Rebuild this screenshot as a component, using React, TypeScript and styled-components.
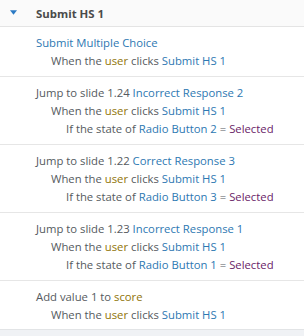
import React from 'react';
import styled, { createGlobalStyle } from 'styled-components';

type Tone = 'plain' | 'link' | 'user' | 'value';

type Part = [string, Tone];

interface ActionItem {
	lines: Part[][];
}

// the trigger line every action shares
const clickLine: Part[] = [
	['When the ', 'plain'],
	['user', 'user'],
	[' clicks ', 'plain'],
	['Submit HS 1', 'link'],
];

const stateLine = (button: string): Part[] => [
	['If the state of ', 'plain'],
	[button, 'link'],
	[' = ', 'plain'],
	['Selected', 'value'],
];

const actions: ActionItem[] = [
	{
		lines: [[['Submit Multiple Choice', 'link']], clickLine],
	},
	{
		lines: [
			[
				['Jump to slide 1.24 ', 'plain'],
				['Incorrect Response 2', 'link'],
			],
			clickLine,
			stateLine('Radio Button 2'),
		],
	},
	{
		lines: [
			[
				['Jump to slide 1.22 ', 'plain'],
				['Correct Response 3', 'link'],
			],
			clickLine,
			stateLine('Radio Button 3'),
		],
	},
	{
		lines: [
			[
				['Jump to slide 1.23 ', 'plain'],
				['Incorrect Response 1', 'link'],
			],
			clickLine,
			stateLine('Radio Button 1'),
		],
	},
	{
		lines: [
			[
				['Add value 1 to ', 'plain'],
				['score', 'user'],
			],
			clickLine,
		],
	},
];

const App = () => {
	return (
		<>
			<GlobalStyle />
			<Panel>
				<Header>
					<Caret viewBox="0 0 8 5">
						<path d="M0 0 H8 L4 5 Z" />
					</Caret>
					<HeaderTitle>Submit HS 1</HeaderTitle>
				</Header>
				<List>
					{actions.map((action, i) => (
						<Row key={i}>
							{action.lines.map((line, depth) => (
								<Line key={depth} depth={depth}>
									{line.map(([text, tone], k) => (
										<Token key={k} tone={tone}>
											{text}
										</Token>
									))}
								</Line>
							))}
						</Row>
					))}
				</List>
			</Panel>
		</>
	);
};

export default App;

const GlobalStyle = createGlobalStyle`
	html, body {
		margin: 0;
		padding: 0;
		background-color: #f0f2f5;
	}
	body {
		font-family: "Open Sans", "Noto Sans", sans-serif;
	}
`;

const Panel = styled.div`
	width: 304px;
	display: flex;
	flex-direction: column;
	background-color: #ffffff;
	border-bottom: 1px solid #e2e4e6;
`;

const Header = styled.div`
	height: 26px;
	display: flex;
	align-items: center;
	background-color: #fafafa;
	border-bottom: 1px solid #e4e4e4;
	padding-left: 10px;
`;

const Caret = styled.svg`
	width: 7px;
	height: 5px;
	fill: #2b7ac4;
	margin-right: 19px;
	margin-top: -1px;
`;

const HeaderTitle = styled.span`
	font-size: 11.4px;
	font-weight: 700;
	color: #4a4a4a;
`;

const List = styled.div`
	display: flex;
	flex-direction: column;
`;

const Row = styled.div`
	padding: 7px 0 6px 36px;
	border-bottom: 1px solid #e6e6e6;
	&:last-child {
		border-bottom: none;
		padding-bottom: 5px;
	}
`;

const Line = styled.div<{ depth: number }>`
	height: 18px;
	line-height: 18px;
	padding-left: ${(props) => props.depth * 15}px;
	font-size: 11.3px;
	white-space: nowrap;
`;

const toneColors: Record<Tone, string> = {
	plain: '#555a60',
	link: '#2d78b2',
	user: '#8f7408',
	value: '#6a2468',
};

const Token = styled.span<{ tone: Tone }>`
	color: ${(props) => toneColors[props.tone]};
	white-space: pre;
`;
